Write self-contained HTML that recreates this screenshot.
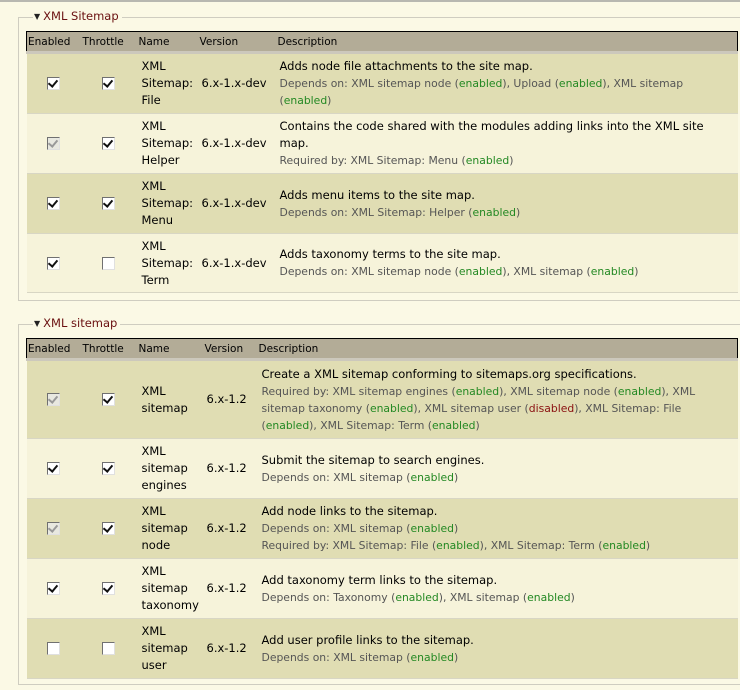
<!DOCTYPE html>
<html><head><meta charset="utf-8"><style>
*{margin:0;padding:0;box-sizing:border-box}
body{width:740px;height:690px;background:#fbf9e5;font-family:"DejaVu Sans","Liberation Sans",sans-serif;color:#000;position:relative;overflow:hidden}
.topline{position:absolute;left:0;top:0;width:740px;height:2px;background:#b8b8b0}
.fs{position:absolute;left:18px;width:740px;border:1px solid #cfcdc0;border-right:none}
.lg{position:absolute;left:14px;top:-9px;background:#fbf9e5;padding:0 3px 0 1px;font-size:11.5px;color:#6a1010;white-space:nowrap}
.lg b{font-size:8px;color:#222;font-weight:normal;margin-right:3px;position:relative;top:-1px}
table{position:absolute;left:26px;width:712px;border-collapse:collapse;table-layout:fixed}
th{background:#b3ac97;font-weight:normal;font-size:10.5px;text-align:left;padding:0 0 0 2px;height:21px;border-top:1px solid #000;border-bottom:3px solid #ccc8bc;white-space:nowrap}
th:first-child{border-left:1px solid #000;padding-left:1px}
th:last-child{border-right:1px solid #000}
td{font-size:11.5px;line-height:17px;padding:0 0 0 5px;vertical-align:middle;border-bottom:1px solid #d8d6c4;white-space:nowrap}
tr.o td{background:#e0ddb3}
tr.e td{background:#f6f3da}
td.c{text-align:center;padding:0}
.d{font-size:10.8px;color:#555;line-height:17px}
.g{color:#228822}.r{color:#8a1010}
.cb{display:inline-block;width:13px;height:13px;background:#fff;border:1px solid;border-color:#707070 #e0e0e0 #e0e0e0 #707070;position:relative;vertical-align:middle}
.cb.k::after{content:"";position:absolute;left:2px;top:0px;width:4px;height:7px;border:solid #111;border-width:0 2px 2px 0;transform:rotate(40deg)}
.cb.dis{background:#e8e8e0}
.cb.dis::after{border-color:#999}
</style></head><body>
<div class="topline"></div>

<div class="fs" style="top:17px;height:284px"><div class="lg"><b>▼</b>XML Sitemap</div></div>
<table style="top:31px">
<colgroup><col style="width:54px"><col style="width:56px"><col style="width:61px"><col style="width:78px"><col></colgroup>
<tr><th>Enabled</th><th>Throttle</th><th>Name</th><th>Version</th><th>Description</th></tr>
<tr class="o" style="height:61px"><td class="c"><span class="cb k"></span></td><td class="c"><span class="cb k"></span></td><td>XML<br>Sitemap:<br>File</td><td style="padding-left:4px">6.x-1.x-dev</td><td style="padding-left:4px">Adds node file attachments to the site map.<div class="d">Depends on: XML sitemap node (<span class="g">enabled</span>), Upload (<span class="g">enabled</span>), XML sitemap<br>(<span class="g">enabled</span>)</div></td></tr>
<tr class="e" style="height:60px"><td class="c"><span class="cb k dis"></span></td><td class="c"><span class="cb k"></span></td><td>XML<br>Sitemap:<br>Helper</td><td style="padding-left:4px">6.x-1.x-dev</td><td style="padding-left:4px">Contains the code shared with the modules adding links into the XML site<br>map.<div class="d">Required by: XML Sitemap: Menu (<span class="g">enabled</span>)</div></td></tr>
<tr class="o" style="height:60px"><td class="c"><span class="cb k"></span></td><td class="c"><span class="cb k"></span></td><td>XML<br>Sitemap:<br>Menu</td><td style="padding-left:4px">6.x-1.x-dev</td><td style="padding-left:4px">Adds menu items to the site map.<div class="d">Depends on: XML Sitemap: Helper (<span class="g">enabled</span>)</div></td></tr>
<tr class="e" style="height:59px"><td class="c"><span class="cb k"></span></td><td class="c"><span class="cb"></span></td><td>XML<br>Sitemap:<br>Term</td><td style="padding-left:4px">6.x-1.x-dev</td><td style="padding-left:4px">Adds taxonomy terms to the site map.<div class="d">Depends on: XML sitemap node (<span class="g">enabled</span>), XML sitemap (<span class="g">enabled</span>)</div></td></tr>
</table>

<div class="fs" style="top:324px;height:361px"><div class="lg"><b>▼</b>XML sitemap</div></div>
<table style="top:338px">
<colgroup><col style="width:54px"><col style="width:56px"><col style="width:66px"><col style="width:54px"><col></colgroup>
<tr><th>Enabled</th><th>Throttle</th><th>Name</th><th>Version</th><th>Description</th></tr>
<tr class="o" style="height:79px"><td class="c"><span class="cb k dis"></span></td><td class="c"><span class="cb k"></span></td><td>XML<br>sitemap</td><td style="padding-left:4px">6.x-1.2</td><td>Create a XML sitemap conforming to sitemaps.org specifications.<div class="d">Required by: XML sitemap engines (<span class="g">enabled</span>), XML sitemap node (<span class="g">enabled</span>), XML<br>sitemap taxonomy (<span class="g">enabled</span>), XML sitemap user (<span class="r">disabled</span>), XML Sitemap: File<br>(<span class="g">enabled</span>), XML Sitemap: Term (<span class="g">enabled</span>)</div></td></tr>
<tr class="e" style="height:60px"><td class="c"><span class="cb k"></span></td><td class="c"><span class="cb k"></span></td><td>XML<br>sitemap<br>engines</td><td style="padding-left:4px">6.x-1.2</td><td>Submit the sitemap to search engines.<div class="d">Depends on: XML sitemap (<span class="g">enabled</span>)</div></td></tr>
<tr class="o" style="height:60px"><td class="c"><span class="cb k dis"></span></td><td class="c"><span class="cb k"></span></td><td>XML<br>sitemap<br>node</td><td style="padding-left:4px">6.x-1.2</td><td>Add node links to the sitemap.<div class="d">Depends on: XML sitemap (<span class="g">enabled</span>)<br>Required by: XML Sitemap: File (<span class="g">enabled</span>), XML Sitemap: Term (<span class="g">enabled</span>)</div></td></tr>
<tr class="e" style="height:60px"><td class="c"><span class="cb k"></span></td><td class="c"><span class="cb k"></span></td><td>XML<br>sitemap<br>taxonomy</td><td style="padding-left:4px">6.x-1.2</td><td>Add taxonomy term links to the sitemap.<div class="d">Depends on: Taxonomy (<span class="g">enabled</span>), XML sitemap (<span class="g">enabled</span>)</div></td></tr>
<tr class="o" style="height:60px"><td class="c"><span class="cb"></span></td><td class="c"><span class="cb"></span></td><td>XML<br>sitemap<br>user</td><td style="padding-left:4px">6.x-1.2</td><td>Add user profile links to the sitemap.<div class="d">Depends on: XML sitemap (<span class="g">enabled</span>)</div></td></tr>
</table>
</body></html>
